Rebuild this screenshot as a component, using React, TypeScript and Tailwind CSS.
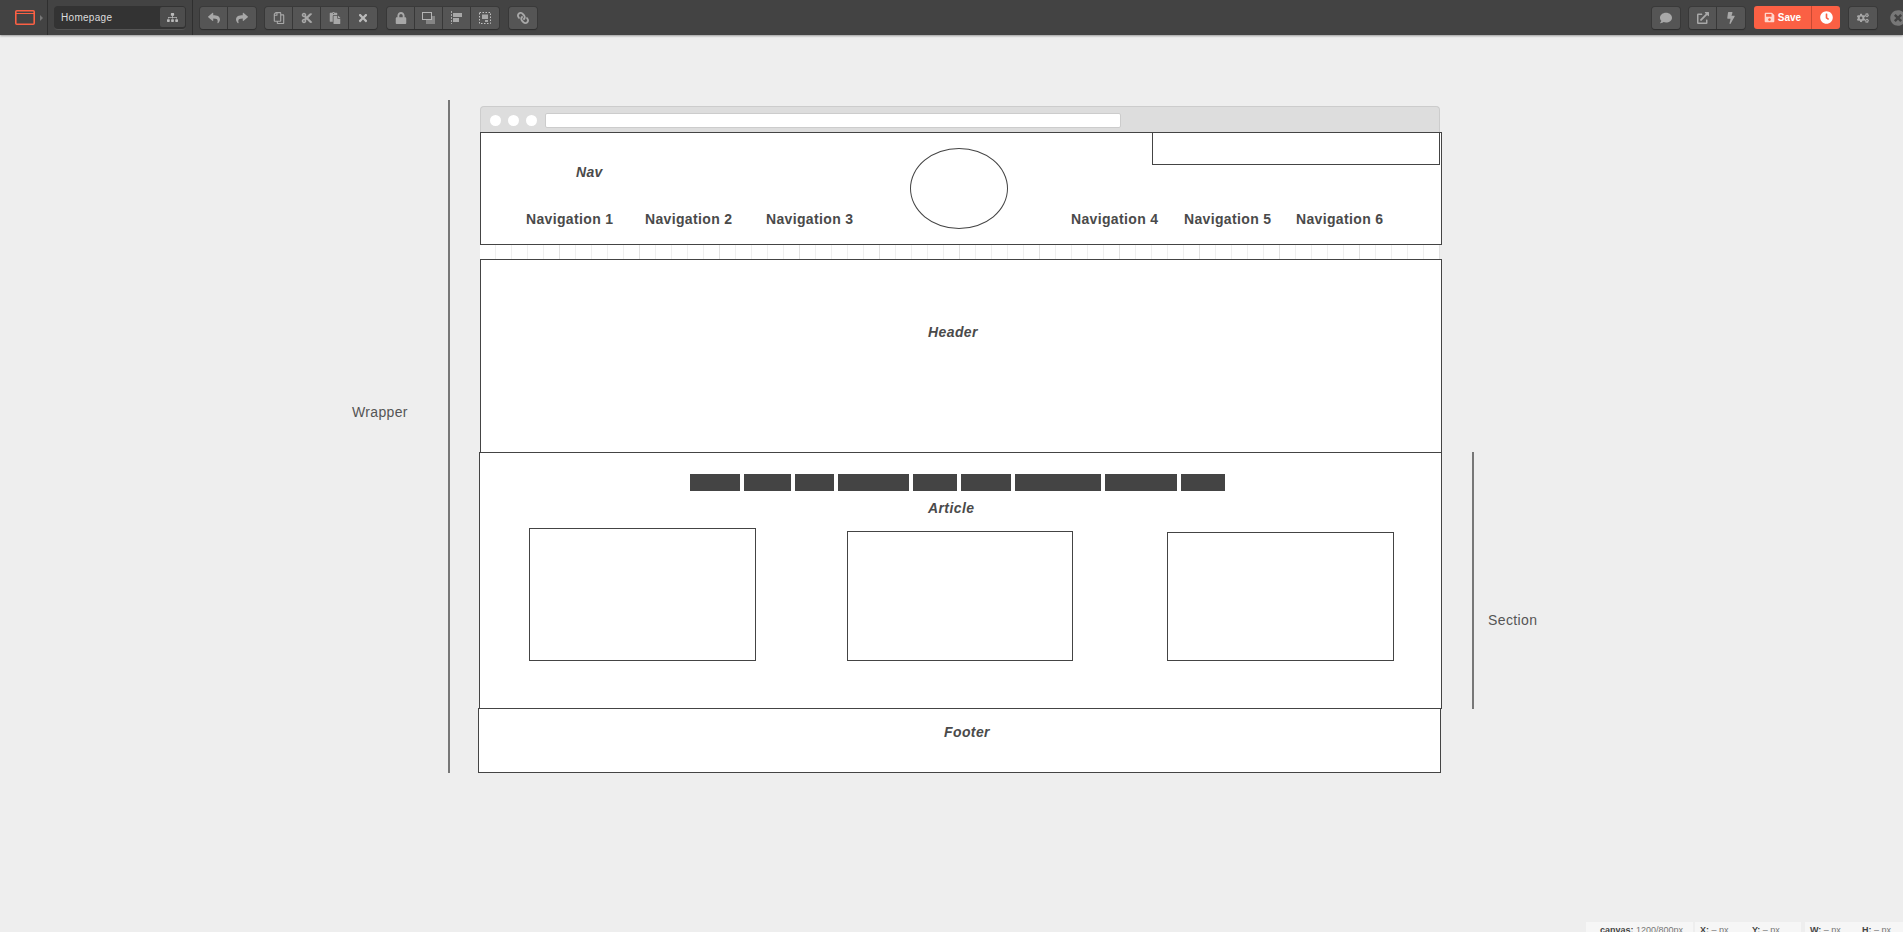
import type { ReactNode } from 'react'
import {
  FaBolt, FaClock, FaCogs, FaComment, FaCut, FaExternalLinkAlt, FaLink, FaLock, FaPaste,
  FaRegCopy, FaReply, FaSave, FaShare, FaSitemap, FaTimes, FaTimesCircle,
} from 'react-icons/fa'

function Btn({ children, className = '' }: { children: ReactNode; className?: string }) {
  return (
    <div className={`h-[22px] w-[28px] flex items-center justify-center text-[#a8a8a8] text-[12px] bg-[#555] border-r border-[#383838] last:border-r-0 ${className}`}>
      {children}
    </div>
  )
}

function Group({ children, className = '' }: { children: ReactNode; className?: string }) {
  return (
    <div className={`flex rounded-[3px] overflow-hidden shadow-[0_1px_1px_#2e2e2e,0_0_0_1px_#3a3a3a] ${className}`}>
      {children}
    </div>
  )
}

function LayersIcon() {
  return (
    <svg width="13" height="12" viewBox="0 0 13 12">
      <rect x="4" y="4" width="9" height="8" fill="#858585" />
      <rect x="0.5" y="0.5" width="9" height="7" fill="#555" stroke="#b5b5b5" />
    </svg>
  )
}

function AlignIcon() {
  return (
    <svg width="11" height="13" viewBox="0 0 11 13" fill="#a8a8a8">
      <path d="M0.5 0v13" stroke="#a8a8a8" strokeDasharray="2 1" />
      <rect x="2" y="2" width="9" height="4" />
      <rect x="2" y="7" width="6" height="4" />
    </svg>
  )
}

function GroupIcon() {
  return (
    <svg width="12" height="12" viewBox="0 0 12 12" fill="#a8a8a8">
      <rect x="0.5" y="0.5" width="11" height="11" fill="none" stroke="#c0c0c0" strokeDasharray="1.5 1.5" />
      <rect x="3" y="2.5" width="6" height="4.5" />
      <rect x="6" y="8" width="3" height="2" />
    </svg>
  )
}

function Toolbar() {
  return (
    <div className="h-[35px] flex items-center bg-[#434343] shadow-[0_1px_2px_#999] relative z-10 shrink-0">
      <svg className="ml-[15px]" width="20" height="15" viewBox="0 0 20 15" fill="none" stroke="#fb6044" strokeWidth="1.6">
        <rect x="0.8" y="0.8" width="18.4" height="13.4" rx="1" />
        <path d="M1 3.5h18" strokeWidth="1" />
      </svg>
      <div className="ml-[5px] w-0 h-0 border-y-[3px] border-y-transparent border-l-[3px] border-l-[#777]" />
      <div className="ml-[4px] w-px h-[35px] bg-[#2f2f2f]" />
      <div className="ml-[6px] w-[132px] h-[24px] bg-[#333] rounded-[4px] flex items-center justify-between border-b border-[#555]">
        <span className="ml-[7px] text-[10px] tracking-[0.3px] text-[#ddd]">Homepage</span>
        <div className="w-[25px] h-[20px] mr-px bg-[#4d4d4d] rounded-[2px] flex items-center justify-center text-[#bbb] text-[11px]">
          <FaSitemap />
        </div>
      </div>
      <div className="ml-[6px] w-px h-[35px] bg-[#2f2f2f]" />
      <Group className="ml-[7px]">
        <Btn><FaReply /></Btn>
        <Btn><FaShare /></Btn>
      </Group>
      <Group className="ml-[9px]">
        <Btn><FaRegCopy className="-scale-x-100" /></Btn>
        <Btn><FaCut /></Btn>
        <Btn><FaPaste /></Btn>
        <Btn className="text-[9px] text-[#bbb]"><FaTimes /></Btn>
      </Group>
      <Group className="ml-[10px]">
        <Btn className="text-[10px]"><FaLock /></Btn>
        <Btn><LayersIcon /></Btn>
        <Btn><AlignIcon /></Btn>
        <Btn><GroupIcon /></Btn>
      </Group>
      <Group className="ml-[10px]">
        <Btn className="w-[25px]"><FaLink className="-scale-x-100" /></Btn>
      </Group>
      <Group className="ml-auto">
        <Btn className="w-[26px]"><FaComment /></Btn>
      </Group>
      <Group className="ml-[9px]">
        <Btn className="text-[11px]"><FaExternalLinkAlt /></Btn>
        <Btn className="w-[27px] text-[10px]"><FaBolt /></Btn>
      </Group>
      <div className="ml-[9px] flex rounded-[3px] overflow-hidden">
        <div className="w-[58px] h-[23px] bg-[#fb6044] flex items-center justify-center gap-[3px] text-white text-[10px] font-bold border-r border-[#c94a33]">
          <FaSave className="text-[#ffd5cc] text-[11px]" />
          <span>Save</span>
        </div>
        <div className="w-[28px] h-[23px] bg-[#fb6044] flex items-center justify-center text-white text-[13px]">
          <FaClock />
        </div>
      </div>
      <Group className="ml-[9px]">
        <Btn className="w-[26px]"><FaCogs /></Btn>
      </Group>
      <div className="ml-[13px] w-[13px] overflow-hidden text-[#777] text-[16px]">
        <FaTimesCircle />
      </div>
    </div>
  )
}

function Wireframe() {
  const cells = Array.from({ length: 60 }, (_, i) => i)
  return (
    <>
      {/* browser chrome */}
      <div className="absolute left-[480px] top-[106px] w-[960px] h-[27px] bg-[#ddd] border-t border-x border-[#ccc] rounded-t-[4px] flex items-center pl-[9px] gap-[7px]">
        {[0, 1, 2].map(i => <div key={i} className="w-[11px] h-[11px] rounded-full bg-white" />)}
        <div className="ml-px w-[576px] h-[15px] bg-white rounded-[2px] border border-[#ccc]" />
      </div>

      {/* ruler strip between nav and header */}
      <div className="absolute left-[480px] top-[244px] w-[960px] h-[16px] bg-white flex">
        {cells.map(i => (
          <div key={i} className={`w-[16px] h-full border-r ${i % 5 === 4 ? 'border-[#e2e2e2]' : 'border-[#efefef]'}`} />
        ))}
      </div>

      {/* nav */}
      <div className="absolute left-[480px] top-[132px] w-[962px] h-[113px] bg-white border border-[#444]" />
      <div className="absolute left-[1152px] top-[132px] w-[288px] h-[33px] bg-white border border-[#444]" />
      <div className="absolute left-[910px] top-[148px] w-[98px] h-[81px] rounded-[50%] border border-[#444]" />
      <span className="absolute left-[576px] top-[162px] text-[14px] font-bold italic tracking-[0.35px] text-[#4a4a4a]">Nav</span>
      <span className="absolute left-[526px] top-[209px] text-[14px] font-bold text-[#4a4a4a] tracking-[0.35px]">Navigation 1</span>
      <span className="absolute left-[645px] top-[209px] text-[14px] font-bold text-[#4a4a4a] tracking-[0.35px]">Navigation 2</span>
      <span className="absolute left-[766px] top-[209px] text-[14px] font-bold text-[#4a4a4a] tracking-[0.35px]">Navigation 3</span>
      <span className="absolute left-[1071px] top-[209px] text-[14px] font-bold text-[#4a4a4a] tracking-[0.35px]">Navigation 4</span>
      <span className="absolute left-[1184px] top-[209px] text-[14px] font-bold text-[#4a4a4a] tracking-[0.35px]">Navigation 5</span>
      <span className="absolute left-[1296px] top-[209px] text-[14px] font-bold text-[#4a4a4a] tracking-[0.35px]">Navigation 6</span>

      {/* header */}
      <div className="absolute left-[480px] top-[259px] w-[962px] h-[194px] bg-white border border-[#444]" />
      <span className="absolute left-[928px] top-[322px] text-[14px] font-bold italic tracking-[0.4px] text-[#4a4a4a]">Header</span>

      {/* section */}
      <div className="absolute left-[479px] top-[452px] w-[963px] h-[257px] bg-white border border-[#444]" />
      <div className="absolute left-[690px] top-[474px] flex gap-[4px]">
        <div className="w-[50px] h-[17px] bg-[#444]" />
        <div className="w-[47px] h-[17px] bg-[#444]" />
        <div className="w-[39px] h-[17px] bg-[#444]" />
        <div className="w-[71px] h-[17px] bg-[#444]" />
        <div className="w-[44px] h-[17px] bg-[#444]" />
        <div className="w-[50px] h-[17px] bg-[#444]" />
        <div className="w-[86px] h-[17px] bg-[#444]" />
        <div className="w-[72px] h-[17px] bg-[#444]" />
        <div className="w-[44px] h-[17px] bg-[#444]" />
      </div>
      <span className="absolute left-[928px] top-[498px] text-[14px] font-bold italic tracking-[0.4px] text-[#4a4a4a]">Article</span>
      <div className="absolute left-[529px] top-[528px] w-[227px] h-[133px] border border-[#444]" />
      <div className="absolute left-[847px] top-[531px] w-[226px] h-[130px] border border-[#444]" />
      <div className="absolute left-[1167px] top-[532px] w-[227px] h-[129px] border border-[#444]" />

      {/* footer */}
      <div className="absolute left-[478px] top-[708px] w-[963px] h-[65px] bg-white border border-[#444]" />
      <span className="absolute left-[944px] top-[722px] text-[14px] font-bold italic tracking-[0.4px] text-[#4a4a4a]">Footer</span>

      {/* wrapper / section brackets */}
      <div className="absolute left-[448px] top-[100px] w-[2px] h-[673px] bg-[#777]" />
      <span className="absolute left-[352px] top-[402px] text-[14px] tracking-[0.35px] text-[#555]">Wrapper</span>
      <div className="absolute left-[1472px] top-[452px] w-[2px] h-[257px] bg-[#777]" />
      <span className="absolute left-[1488px] top-[610px] text-[14px] tracking-[0.4px] text-[#555]">Section</span>
    </>
  )
}

function StatusBar() {
  return (
    <div className="absolute left-[1586px] top-[922px] flex text-[9px] text-[#777]">
      <div className="w-[107px] h-[12px] bg-[#f6f6f6] flex justify-center pl-[4px] pt-[2px] leading-[12px]">
        <b className="text-[#444]">canvas:</b>&nbsp;1200/800px
      </div>
      <div className="ml-[2px] w-[106px] h-[12px] bg-[#f6f6f6] flex pl-[5px] pt-[2px] leading-[12px]">
        <span className="w-[52px]"><b className="text-[#444]">X:</b> – px</span>
        <span><b className="text-[#444]">Y:</b> – px</span>
      </div>
      <div className="ml-[4px] w-[98px] h-[12px] bg-[#f6f6f6] flex pl-[5px] pt-[2px] leading-[12px]">
        <span className="w-[52px]"><b className="text-[#444]">W:</b> – px</span>
        <span><b className="text-[#444]">H:</b> – px</span>
      </div>
    </div>
  )
}

export default function App() {
  return (
    <div className="relative h-[932px] overflow-hidden bg-[#eee] flex flex-col font-['Liberation_Sans',Arial,sans-serif]">
      <Toolbar />
      <Wireframe />
      <StatusBar />
    </div>
  )
}
